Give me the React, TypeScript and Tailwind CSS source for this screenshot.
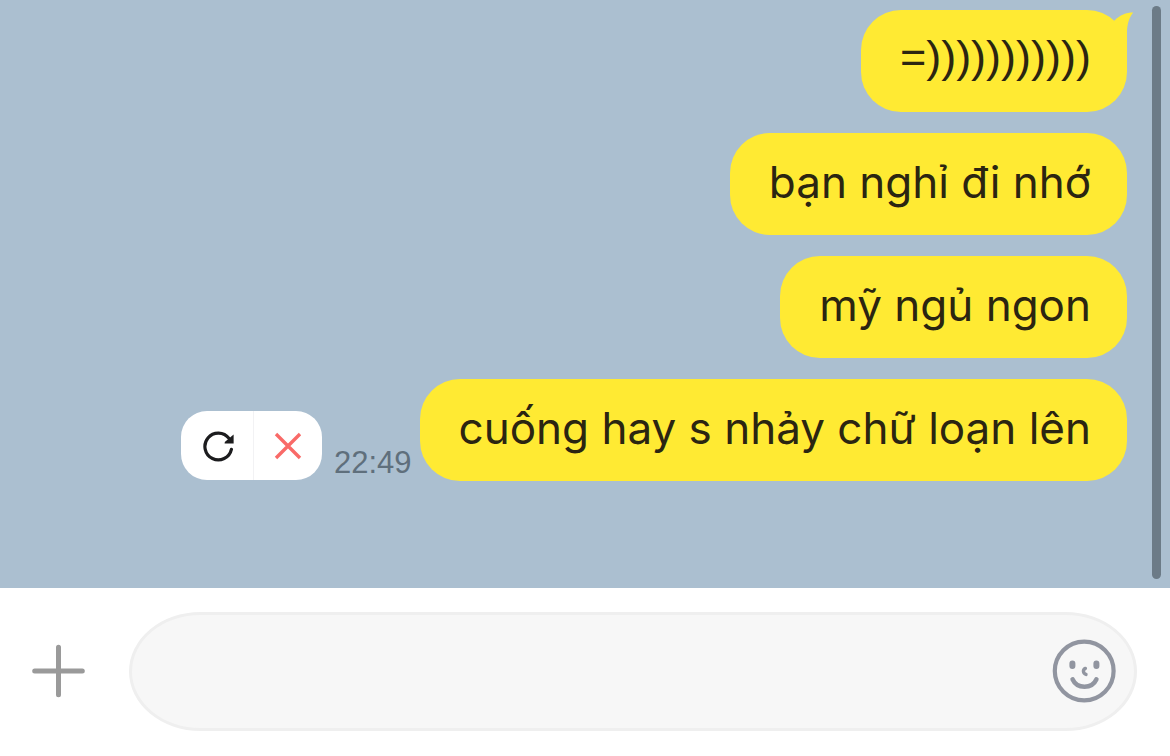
import { useState } from 'react';
import clsx from 'clsx';

interface Message {
  id: number;
  text: string;
  emoticon?: boolean;
  time?: string;
  failed?: boolean;
}

const messages: Message[] = [
  { id: 1, text: '=)))))))))))', emoticon: true },
  { id: 2, text: 'bạn nghỉ đi nhớ' },
  { id: 3, text: 'mỹ ngủ ngon' },
  { id: 4, text: 'cuống hay s nhảy chữ loạn lên', time: '22:49', failed: true },
];

function RetryIcon() {
  return (
    <svg className="h-8 w-8" viewBox="0 0 32 32" fill="none">
      <path d="M29.4 19.4A13.4 13.4 0 1 1 27 8.4" stroke="#1c1c1e" strokeWidth="3.2" strokeLinecap="round" />
      <path d="M31.6 4.4V13.6H22.6L22.8 12Z" fill="#1c1c1e" />
    </svg>
  );
}

function CloseIcon() {
  return (
    <svg className="h-7 w-7" viewBox="0 0 28 28" fill="none">
      <path d="M2 2L26 26M26 2L2 26" stroke="#f96a68" strokeWidth="3.4" />
    </svg>
  );
}

function PlusIcon() {
  return (
    <svg className="h-[54px] w-[54px]" viewBox="0 0 54 54" fill="none">
      <path d="M27.5 3.2V50.8M3.7 27H51.3" stroke="#9a9a9a" strokeWidth="5" strokeLinecap="round" />
    </svg>
  );
}

function SmileIcon() {
  return (
    <svg className="h-16 w-16" viewBox="0 0 64 64" fill="none" stroke="#9195a0" strokeLinecap="round">
      <circle cx="32.2" cy="32" r="29.4" strokeWidth="4.2" />
      <path d="M20.4 24.4V27M44.4 24.4V27" strokeWidth="6" />
      <path d="M33.4 29.4C30.6 30.6 30.8 34.4 34 35.4" strokeWidth="3.4" />
      <path d="M20.6 40.4C25 50.2 40 50.2 44.4 40.4" strokeWidth="4.6" />
    </svg>
  );
}

function Bubble({ message, hasTail }: { message: Message; hasTail: boolean }) {
  return (
    <div className="relative rounded-[40px] bg-[#ffea33] pt-[18px] pr-9 pb-[22px] pl-[39px]">
      <p
        className={clsx(
          'text-[#2b2511]',
          message.emoticon
            ? "pb-1 font-['Liberation_Sans',Arial,sans-serif] text-[45px] leading-[58px]"
            : 'text-[44px] leading-[62px]'
        )}
      >
        {message.text}
      </p>
      {hasTail && (
        <svg className="absolute top-0 -right-2 h-12 w-10" viewBox="0 0 40 48">
          <path d="M19.5 10.5C25 5.2 31 2.6 38.2 2.6C34 8 32 14 32 24V44L4 24Z" fill="#ffea33" />
        </svg>
      )}
    </div>
  );
}

export default function App() {
  const [draft, setDraft] = useState('');

  return (
    <div className="flex min-h-screen flex-col bg-white font-['Inter','Liberation_Sans',sans-serif]">
      <main className="flex flex-1 gap-[25px] bg-[#abbfd0] pr-[9px]">
        <ul className="flex flex-1 flex-col items-end gap-[21px] pt-2.5">
          {messages.map((message, index) => (
            <li key={message.id} className="flex items-end">
              {message.failed && (
                <div className="mr-3 mb-px flex h-[69px] overflow-hidden rounded-[26px] bg-white">
                  <button type="button" aria-label="Gửi lại" className="flex w-[73px] items-center justify-center border-r border-[#f2f2f4] pl-0.5">
                    <RetryIcon />
                  </button>
                  <button type="button" aria-label="Xóa" className="flex w-[68px] items-center justify-center">
                    <CloseIcon />
                  </button>
                </div>
              )}
              {message.time && (
                <time className="mr-2 font-['Liberation_Sans',Arial,sans-serif] text-[31px] leading-9 text-[#5f6f7c]">
                  {message.time}
                </time>
              )}
              <Bubble message={message} hasTail={index === 0} />
            </li>
          ))}
        </ul>
        <div className="mt-1.5 mb-[9px] w-[9px] rounded-full bg-[#6c7b87]" />
      </main>

      <footer className="flex items-center pt-6 pr-[33px] pb-[25px] pl-[31px]">
        <button type="button" aria-label="Thêm" className="mr-11 pb-0.5">
          <PlusIcon />
        </button>
        <div className="flex h-[119px] flex-1 items-center rounded-[72px/60px] border-3 border-[#efefef] bg-[#f7f7f7] pr-[18px] pb-0.5 pl-14">
          <input
            type="text"
            aria-label="Tin nhắn"
            value={draft}
            onChange={(e) => setDraft(e.target.value)}
            className="h-full min-w-0 flex-1 bg-transparent text-[44px] text-[#222222] outline-none"
          />
          <button type="button" aria-label="Biểu tượng cảm xúc">
            <SmileIcon />
          </button>
        </div>
      </footer>
    </div>
  );
}
